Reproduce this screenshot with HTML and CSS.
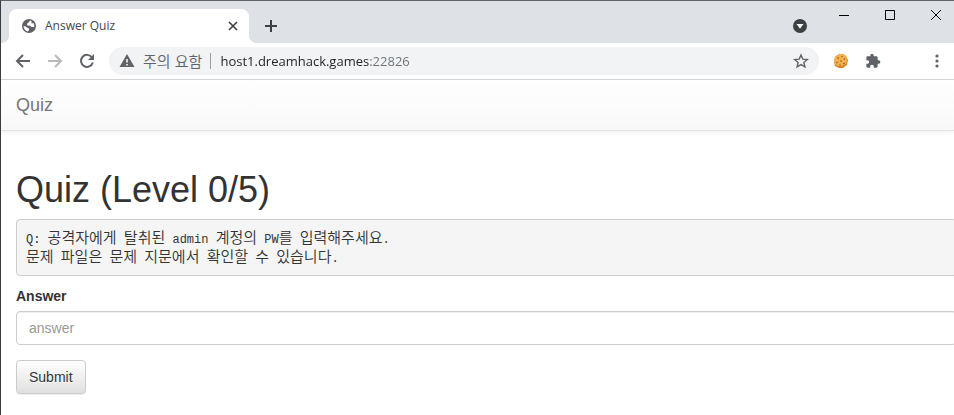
FILE: index.html
```html
<!DOCTYPE html>
<html lang="ko">
<head>
    <meta charset="UTF-8">
    <meta name="viewport" content="width=device-width, initial-scale=1.0">
    <title>Answer Quiz</title>
    <link rel="stylesheet" href="styles.css">
</head>
<body>
<div class="window">
    <!-- Tab strip -->
    <div class="tabstrip">
        <div class="tab">
            <svg class="favicon" width="14" height="14" viewBox="0 0 14 14" aria-hidden="true">
                <circle cx="7" cy="7" r="7" fill="#5f6368"/>
                <path d="M8 1.500Q7 3.500 5.500 4L5 6Q6 7 8 6.500L9.500 8 12.300 8Q12.500 6 11.500 4L9.500 4.500 9.500 2zM1.500 7Q4 7.200 5 8.500L7 9.500V11L6 12.500Q2 11.500 1.500 7z" fill="#fff"/>
            </svg>
            <span class="tab-title">Answer Quiz</span>
            <button class="icon-btn" type="button" aria-label="Close tab">
                <svg width="16" height="16" viewBox="0 0 16 16"><path d="M4 4l8 8M12 4l-8 8" stroke="#3c4043" stroke-width="1.6"/></svg>
            </button>
        </div>
        <button class="icon-btn new-tab" type="button" aria-label="New tab">
            <svg width="16" height="16" viewBox="0 0 16 16"><path d="M8 2v12M2 8h12" stroke="#3c4043" stroke-width="2"/></svg>
        </button>
        <button class="icon-btn tab-search" type="button" aria-label="Search tabs">
            <svg width="16" height="16" viewBox="0 0 16 16"><circle cx="8" cy="8" r="7" fill="#3c4043"/><path d="M4.500 6h7L8 10.800z" fill="#fff"/></svg>
        </button>
        <div class="window-controls">
            <button class="window-btn" type="button" aria-label="Minimize">
                <svg width="12" height="12" viewBox="0 0 12 12"><path d="M1 6.500h10" stroke="#000"/></svg>
            </button>
            <button class="window-btn" type="button" aria-label="Maximize">
                <svg width="12" height="12" viewBox="0 0 12 12"><path d="M1.500 1.500h9v9h-9z" fill="none" stroke="#000"/></svg>
            </button>
            <button class="window-btn" type="button" aria-label="Close">
                <svg width="12" height="12" viewBox="0 0 12 12"><path d="M1 1l10 10M11 1L1 11" stroke="#000"/></svg>
            </button>
        </div>
    </div>

    <!-- Toolbar -->
    <div class="toolbar">
        <button class="icon-btn nav-btn" type="button" aria-label="Back">
            <svg width="16" height="16" viewBox="0 0 16 16"><path d="M15 8H2.500M8 2L2 8l6 6" fill="none" stroke="#5f6368" stroke-width="2"/></svg>
        </button>
        <button class="icon-btn nav-btn" type="button" aria-label="Forward" disabled>
            <svg width="16" height="16" viewBox="0 0 16 16"><path d="M1 8h12.500M8 2l6 6-6 6" fill="none" stroke="#bababa" stroke-width="2"/></svg>
        </button>
        <button class="icon-btn nav-btn" type="button" aria-label="Reload">
            <svg width="16" height="16" viewBox="0 0 16 16"><path d="M13 4.500A6 6 0 1 0 13.800 9.500" fill="none" stroke="#5f6368" stroke-width="2"/><path d="M15 1v6H9z" fill="#5f6368"/></svg>
        </button>
        <div class="omnibox">
            <svg width="16" height="16" viewBox="0 0 16 16" aria-hidden="true"><path d="M8 1L15.500 14H.500z" fill="#5f6368"/><path d="M8 6v3.500M8 11v1.500" stroke="#fff" stroke-width="1.500"/></svg>
            <label class="security" for="url">주의 요함</label>
            <input class="url" id="url" type="text" value="host1.dreamhack.games:22826" spellcheck="false">
            <button class="icon-btn" type="button" aria-label="Bookmark">
                <svg width="16" height="16" viewBox="0 0 16 16"><path d="M8 2l1.800 4.100 4.500.4-3.400 3 1 4.400L8 11.600l-3.900 2.300 1-4.400-3.400-3 4.500-.4z" fill="none" stroke="#5f6368" stroke-width="1.400"/></svg>
            </button>
        </div>
        <div class="extensions">
            <button class="icon-btn" type="button" aria-label="Cookies">
                <svg width="16" height="16" viewBox="0 0 16 16">
                    <path d="M6 1h4l3 2 2 4-1 5-4 3H6l-4-2-1-4 1-5z" fill="#d98524"/>
                    <path d="M6 1h4l3 2 1 4-1 4-4 2H5L2 11 1 8l1-4z" fill="#f3b04f"/>
                    <g fill="#8a5220"><circle cx="5" cy="5" r=".8"/><circle cx="9" cy="3.500" r=".7"/><circle cx="11.500" cy="6" r=".8"/><circle cx="8" cy="8" r=".8"/><circle cx="4" cy="9.500" r=".7"/><circle cx="11" cy="10.500" r=".8"/><circle cx="7" cy="12" r=".7"/></g>
                </svg>
            </button>
            <button class="icon-btn" type="button" aria-label="Extensions">
                <svg width="16" height="16" viewBox="0 0 24 24"><path d="M20.500 11H19V7c0-1.100-.9-2-2-2h-4V3.500a2.500 2.500 0 0 0-5 0V5H4c-1.100 0-2 .9-2 2v3.800h1.500c1.500 0 2.700 1.200 2.700 2.700S5 16.200 3.500 16.200H2V20c0 1.100.9 2 2 2h3.800v-1.500c0-1.500 1.200-2.700 2.700-2.700s2.700 1.200 2.700 2.700V22H17c1.100 0 2-.9 2-2v-4h1.500a2.500 2.500 0 0 0 0-5z" fill="#5f6368"/></svg>
            </button>
        </div>
        <button class="icon-btn" type="button" aria-label="Menu">
            <svg width="16" height="16" viewBox="0 0 16 16" fill="#5f6368"><circle cx="8" cy="3" r="1.600"/><circle cx="8" cy="8" r="1.600"/><circle cx="8" cy="13" r="1.600"/></svg>
        </button>
    </div>

    <!-- Page -->
    <nav class="navbar">
        <a class="navbar-brand" href="#">Quiz</a>
    </nav>
    <main class="container">
        <h1>Quiz (Level 0/5)</h1>
        <pre>Q: <span class="ko">공격자에게</span> <span class="ko">탈취된</span> admin <span class="ko">계정의</span> PW<span class="ko">를</span> <span class="ko">입력해주세요</span>.
<span class="ko">문제</span> <span class="ko">파일은</span> <span class="ko">문제</span> <span class="ko">지문에서</span> <span class="ko">확인할</span> <span class="ko">수</span> <span class="ko">있습니다</span>.</pre>
        <form>
            <label class="form-label" for="answer">Answer</label>
            <input class="form-control" id="answer" type="text" placeholder="answer">
            <button class="btn" type="submit">Submit</button>
        </form>
    </main>
</div>
</body>
</html>
```

FILE: styles.css
```css
* {
    box-sizing: border-box;
}

body {
    margin: 0;
    background: #fff;
    color: #333;
    font-family: "Liberation Sans", Arial, sans-serif;
    font-size: 14px;
    line-height: 20px;
}

.window {
    min-height: 100vh;
    border-top: 1px solid #636467;
    border-left: 1px solid #3c3c3e;
    overflow: hidden;
}

.icon-btn,
.window-btn {
    display: flex;
    align-items: center;
    justify-content: center;
    flex: none;
    padding: 0;
    border: 0;
    background: none;
}

svg {
    display: block;
    flex: none;
}

/* tab strip */
.tabstrip {
    display: flex;
    height: 42px;
    padding-left: 8px;
    background: #dee1e6;
}

.tab {
    position: relative;
    display: flex;
    align-items: center;
    width: 240px;
    margin-top: 8px;
    padding: 0 8px 0 13px;
    border-radius: 8px 8px 0 0;
    background: #fff;
}

.tab::before,
.tab::after {
    content: "";
    position: absolute;
    bottom: 0;
    width: 8px;
    height: 8px;
}

.tab::before {
    left: -8px;
    background: radial-gradient(circle at 0 0, transparent 8px, #fff 8px);
}

.tab::after {
    right: -8px;
    background: radial-gradient(circle at 100% 0, transparent 8px, #fff 8px);
}

.tab-title {
    flex: 1;
    margin-left: 9px;
    color: #45484c;
    font-family: "Open Sans", "Noto Sans CJK KR", sans-serif;
    font-size: 12px;
}

.new-tab {
    align-self: flex-end;
    height: 34px;
    margin-left: 14px;
}

.tab-search {
    align-self: flex-end;
    height: 34px;
    margin-left: auto;
}

.window-controls {
    display: flex;
    margin-left: 13px;
    margin-right: -5px;
}

.window-btn {
    width: 46px;
    height: 28px;
}

/* toolbar */
.toolbar {
    display: flex;
    align-items: center;
    height: 37px;
    padding: 0 9px 0 14px;
    border-bottom: 1px solid #d9dadd;
}

.nav-btn {
    margin-right: 16px;
}

.nav-btn + .omnibox {
    margin-left: -2px;
}

.omnibox {
    display: flex;
    align-items: center;
    flex: 1;
    height: 28px;
    padding: 0 10px;
    border-radius: 14px;
    background: #f1f3f4;
}

.security {
    margin-left: 8px;
    padding-right: 8px;
    border-right: 1px solid #9aa0a6;
    color: #5f6368;
    font-family: "Noto Sans CJK KR", sans-serif;
    font-size: 15px;
    font-weight: 350;
    line-height: 16px;
    white-space: nowrap;
}

/* host is dark, port is grey */
.url {
    flex: 1;
    min-width: 0;
    margin-left: 9px;
    padding: 0;
    border: 0;
    outline: 0;
    background: linear-gradient(to right, #202124 149px, #6d7175 149px);
    -webkit-background-clip: text;
    background-clip: text;
    color: transparent;
    font-family: "Open Sans", sans-serif;
    font-size: 13px;
}

.extensions {
    display: flex;
    gap: 16px;
    margin: 0 48px 0 14px;
}

/* page */
.navbar {
    display: flex;
    align-items: center;
    height: 51px;
    padding: 0 15px;
    border-bottom: 1px solid #e4e4e4;
    background: linear-gradient(#fff, #f8f8f8);
    box-shadow: 0 1px 5px rgba(0, 0, 0, 0.075);
}

.navbar-brand {
    color: #777;
    font-size: 18px;
    text-decoration: none;
}

.container {
    margin-right: -3px;
    padding: 39px 0 20px 15px;
}

h1 {
    margin: 0 0 9px;
    font-size: 36px;
    font-weight: 500;
    line-height: 40px;
}

pre {
    margin: 0 0 10px;
    padding: 11px 9px 6px;
    border: 1px solid #ccc;
    border-radius: 4px;
    background: #f5f5f5;
    font-family: "Liberation Mono", monospace;
    font-size: 12px;
    line-height: 19px;
    overflow: hidden;
}

.ko {
    font-family: "Noto Sans CJK KR", sans-serif;
    font-size: 15px;
    font-weight: 350;
    line-height: 1px;
}

.form-label {
    display: block;
    margin-bottom: 5px;
    font-weight: bold;
}

.form-control {
    display: block;
    width: 100%;
    height: 34px;
    margin-bottom: 15px;
    padding: 6px 12px;
    border: 1px solid #ccc;
    border-radius: 4px;
    box-shadow: inset 0 1px 1px rgba(0, 0, 0, 0.075);
    font: inherit;
}

.form-control::placeholder {
    color: #999;
}

.btn {
    height: 34px;
    padding: 0 12px;
    border: 1px solid #ccc;
    border-radius: 4px;
    background: linear-gradient(#fff, #e0e0e0);
    box-shadow: 0 1px 1px rgba(0, 0, 0, 0.075);
    color: #333;
    font: inherit;
    text-shadow: 0 1px 0 #fff;
}
```
